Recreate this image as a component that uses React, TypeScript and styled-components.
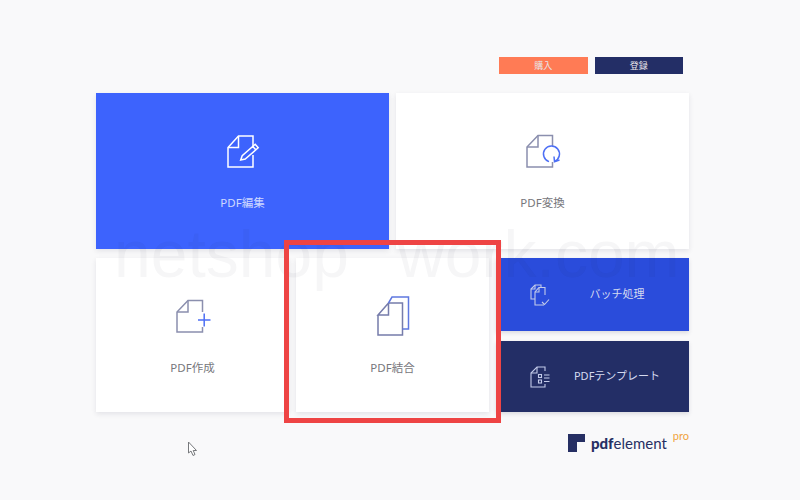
import styled, { createGlobalStyle } from "styled-components";

const GlobalStyle = createGlobalStyle`
  html, body {
    margin: 0;
    padding: 0;
    background: #f9f9fa;
  }
`;

const FONT = `"Noto Sans", "Noto Sans CJK JP", sans-serif`;

const Page = styled.div`
  position: relative;
  width: 800px;
  height: 500px;
  overflow: hidden;
  box-sizing: border-box;
  padding: 57px 111px 0 96px;
  background: #f9f9fa;
  font-family: ${FONT};
`;

const TopBar = styled.div`
  display: flex;
  justify-content: flex-end;
  gap: 7px;
  padding-right: 6px;
  margin-bottom: 19px;
`;

const TopButton = styled.button<{ $bg: string }>`
  width: 88.500px;
  height: 17px;
  border: 0;
  padding: 0;
  background: ${(p) => p.$bg};
  color: #e9e6ea;
  font-family: ${FONT};
  font-size: 9px;
  line-height: 17px;
`;

const Row = styled.div<{ $gap: number; $mb?: number }>`
  display: flex;
  gap: ${(p) => p.$gap}px;
  margin-bottom: ${(p) => p.$mb ?? 0}px;
`;

const Card = styled.div<{ $dark?: boolean; $h: number; $w: number }>`
  width: ${(p) => p.$w}px;
  height: ${(p) => p.$h}px;
  box-sizing: border-box;
  padding-top: 42px;
  display: flex;
  flex-direction: column;
  align-items: center;
  background: ${(p) => (p.$dark ? "#3d63fd" : "#ffffff")};
  color: ${(p) => (p.$dark ? "#cfd9ff" : "#77777c")};
  box-shadow: 0 2px 5px rgba(40, 40, 70, 0.1);
`;

const Label = styled.div`
  margin-top: 25px;
  font-size: 11.500px;
  line-height: 14px;
  white-space: nowrap;
`;

const Icon = styled.svg`
  width: 34px;
  height: 36px;
  overflow: visible;
  fill: none;
  stroke-width: 1.5;
`;

const SideStack = styled.div`
  display: flex;
  flex-direction: column;
  gap: 10px;
`;

const SideCard = styled.div<{ $bg: string; $h: number }>`
  width: 193px;
  height: ${(p) => p.$h}px;
  box-sizing: border-box;
  padding: 0 5px 0 34px;
  display: flex;
  align-items: center;
  background: ${(p) => p.$bg};
  color: #d5daf0;
  box-shadow: 0 2px 4px rgba(40, 40, 70, 0.14);
`;

const SideIcon = styled.svg`
  width: 20px;
  height: 22px;
  flex: none;
  fill: none;
  stroke: #c3cbea;
  stroke-width: 1.1;
`;

const SideLabel = styled.div`
  flex: 1;
  margin-top: -1px;
  text-align: center;
  font-size: 11px;
  line-height: 14px;
  white-space: nowrap;
`;

const Brand = styled.div`
  display: flex;
  justify-content: flex-end;
  margin-top: 22px;
`;

const BrandLockup = styled.div`
  display: flex;
  align-items: flex-start;
  color: #262f63;
  font-family: "Lato", sans-serif;
`;

const BrandMark = styled.svg`
  width: 18px;
  height: 18px;
  margin-right: 5px;
  fill: #262f63;
`;

const BrandName = styled.div`
  font-size: 15px;
  line-height: 18px;
  font-weight: 400;
  b {
    font-weight: 900;
  }
`;

const BrandPro = styled.div`
  margin: -4px 0 0 6px;
  color: #f0a33c;
  font-size: 11px;
  line-height: 12px;
`;

const Highlight = styled.div`
  position: absolute;
  left: 284px;
  top: 240px;
  width: 217px;
  height: 183px;
  box-sizing: border-box;
  border: 5px solid #ee4444;
  pointer-events: none;
`;

const Watermark = styled.div`
  position: absolute;
  left: 114px;
  top: 221px;
  color: rgba(30, 30, 60, 0.04);
  font-family: "Liberation Sans", sans-serif;
  font-size: 66px;
  line-height: 66px;
  word-spacing: 30px;
  white-space: nowrap;
  pointer-events: none;
`;

const Cursor = styled.svg`
  position: absolute;
  left: 187px;
  top: 441px;
  width: 12px;
  height: 16px;
`;

const GREY = "#8b8fae";
const BLUE = "#4d6ff5";

function App() {
  return (
    <Page>
      <GlobalStyle />
      <TopBar>
        <TopButton $bg="#ff7b55">購入</TopButton>
        <TopButton $bg="#232e66">登録</TopButton>
      </TopBar>

      <Row $gap={7} $mb={9}>
        <Card $dark $w={293} $h={156}>
          <Icon viewBox="0 0 34 36" stroke="#ffffff">
            <path d="M27 13V1H12.500L2 12.500V32H27V20" />
            <path d="M12.500 1V12.500H2" />
            <path d="M14.700 25L16.200 20.700L29.200 9.300L32.200 12.700L19.200 24.100Z" />
            <path d="M26.800 11.400L29.800 14.800" />
          </Icon>
          <Label>PDF編集</Label>
        </Card>
        <Card $w={293} $h={156}>
          <Icon viewBox="0 0 34 36" stroke={GREY}>
            <path d="M26.500 11V0.500H12L1 12V32H26.500V27" />
            <path d="M12 0.500V12H1" />
            <path stroke={BLUE} d="M23 26.600A8 8 0 1 1 28.500 26.400" />
            <path stroke={BLUE} d="M28 21.500L28.500 26.700L33.500 25" />
          </Icon>
          <Label>PDF変換</Label>
        </Card>
      </Row>

      <Row $gap={7}>
        <Card $w={193} $h={154}>
          <Icon viewBox="0 0 34 36" stroke={GREY}>
            <path d="M26.500 12V0.500H12L1 12V32H26.500V27" />
            <path d="M12 0.500V12H1" />
            <path stroke={BLUE} d="M22 20H34.500M28.200 13.500V26.500" />
          </Icon>
          <Label>PDF作成</Label>
        </Card>
        <Card $w={193} $h={154}>
          <Icon viewBox="0 0 34 36" stroke="#767cab">
            <path d="M2 15V35H26.500V3H12.500L2 15H12.500V3" />
            <path stroke="#5f78e0" d="M12.500 3L16 -3H32.500V29H26.500" />
          </Icon>
          <Label>PDF結合</Label>
        </Card>
        <SideStack>
          <SideCard $bg="#2a4cdb" $h={73}>
            <SideIcon viewBox="0 0 20 22">
              <path d="M5 15H1V5L5 1H11V3" />
              <path d="M5 1V5H1" />
              <path d="M14 21H5V8L9 3.500H15V11" />
              <path d="M9 3.500V8H5" />
              <path d="M12 18L14.500 20.500L19 15.500" />
            </SideIcon>
            <SideLabel>バッチ処理</SideLabel>
          </SideCard>
          <SideCard $bg="#232e66" $h={71}>
            <SideIcon viewBox="0 0 20 22">
              <path d="M15 5V1H7L1 7V21H15V18" />
              <path d="M7 1V7H1" />
              <rect x="8.500" y="8.500" width="3" height="3" />
              <rect x="8.500" y="14" width="3" height="3" />
              <path d="M14 9H19.500M14 12H19.500M14 15.500H19.500" />
            </SideIcon>
            <SideLabel>PDFテンプレート</SideLabel>
          </SideCard>
        </SideStack>
      </Row>

      <Brand>
        <BrandLockup>
          <BrandMark viewBox="0 0 18 18">
            <path d="M0 0H17V8H9V18H0Z" />
          </BrandMark>
          <BrandName>
            <b>pdf</b>element
          </BrandName>
          <BrandPro>pro</BrandPro>
        </BrandLockup>
      </Brand>

      <Watermark>netshop work.com</Watermark>
      <Highlight />
      <Cursor viewBox="0 0 12 16">
        <path
          d="M1.500 1V12L4 10L6 14.500L8 13.500L6.200 9.500H9.500Z"
          fill="#fff"
          stroke="#77797c"
          strokeWidth="1"
        />
      </Cursor>
    </Page>
  );
}

export default App;
